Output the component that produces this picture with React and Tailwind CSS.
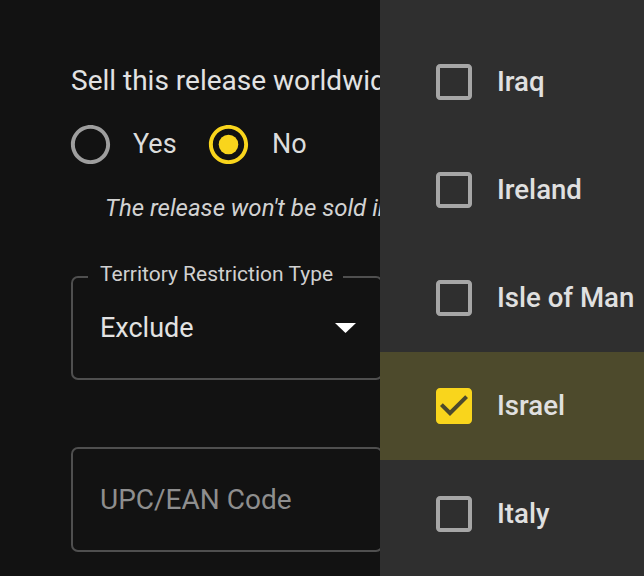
import React from "react";

function RadioIcon({ checked }) {
  const color = checked ? "#f9d51c" : "#9e9e9e";
  return (
    <svg viewBox="0 0 24 24" className="w-[47px] h-[47px] shrink-0" fill={color}>
      <path d="M12 2C6.48 2 2 6.48 2 12s4.48 10 10 10 10-4.48 10-10S17.52 2 12 2zm0 18c-4.42 0-8-3.58-8-8s3.58-8 8-8 8 3.58 8 8-3.58 8-8 8z" />
      {checked && <circle cx="12" cy="12" r="5" />}
    </svg>
  );
}

function CheckIcon({ checked }) {
  if (checked) {
    return (
      <svg viewBox="0 0 24 24" className="w-[48px] h-[48px] shrink-0" fill="#f9d51c">
        <path d="M19 3H5c-1.11 0-2 .9-2 2v14c0 1.1.89 2 2 2h14c1.11 0 2-.9 2-2V5c0-1.1-.89-2-2-2zm-9 14l-5-5 1.41-1.41L10 14.17l7.59-7.59L19 8l-9 9z" />
      </svg>
    );
  }
  return (
    <svg viewBox="0 0 24 24" className="w-[48px] h-[48px] shrink-0" fill="#a6a6a6">
      <path d="M19 5v14H5V5h14m0-2H5c-1.1 0-2 .9-2 2v14c0 1.1.9 2 2 2h14c1.1 0 2-.9 2-2V5c0-1.1-.9-2-2-2z" />
    </svg>
  );
}

const countries = [
  { name: "Iraq", checked: false },
  { name: "Ireland", checked: false },
  { name: "Isle of Man", checked: false },
  { name: "Israel", checked: true },
  { name: "Italy", checked: false },
];

export default function App() {
  return (
    <div className="relative w-[644px] h-[576px] overflow-hidden bg-[#121212] font-['Roboto',sans-serif]">
      <div className="ml-[71px] w-[312px] pt-[63px] flex flex-col">
        <div className="w-[309px] overflow-hidden text-[28px] leading-[36px] text-[#e2e2e2] whitespace-nowrap">
          Sell this release worldwide?
        </div>

        <div className="mt-[21px] h-[48px] flex items-center -ml-[4px]">
          <RadioIcon checked={false} />
          <span className="ml-[19px] w-[72px] text-[27px] leading-[36px] text-[#dcdcdc]">Yes</span>
          <RadioIcon checked={true} />
          <span className="ml-[20px] text-[27px] leading-[36px] text-[#dcdcdc]">No</span>
        </div>

        <div className="mt-[24px] w-[309px] overflow-hidden pl-[34px] text-[24px] leading-[32px] italic text-[#d2d2d2] whitespace-nowrap">
          The release won't be sold in the selected territories.
        </div>

        <div className="relative mt-[52px] h-[104px] border-2 border-[#4f4f4f] rounded-[7px] flex items-center justify-between pl-[27px] pr-[25px]">
          <span className="absolute -top-[18px] left-[15px] pl-[12px] pr-[10px] bg-[#121212] text-[21px] leading-[28px] text-[#d0d0d0] whitespace-nowrap">
            Territory Restriction Type
          </span>
          <span className="text-[27px] leading-[36px] text-[#e2e2e2]">Exclude</span>
          <svg viewBox="0 0 21 10" className="w-[21px] h-[10px]" fill="#ffffff">
            <polygon points="0,0 21,0 10.5,10" />
          </svg>
        </div>

        <div className="mt-[67px] h-[105px] border-2 border-[#4f4f4f] rounded-[7px] flex items-center pl-[27px]">
          <span className="text-[28px] leading-[36px] text-[#8e8e8e] whitespace-nowrap">UPC/EAN Code</span>
        </div>
      </div>

      <div className="absolute top-0 left-[380px] w-[264px] h-full bg-[#2f2f2f] pt-[28px]">
        {countries.map((c) => (
          <div
            key={c.name}
            className={
              "h-[108px] flex items-center pl-[50px] " +
              (c.checked ? "bg-[#4d4a2c]" : "")
            }
          >
            <CheckIcon checked={c.checked} />
            <span className="ml-[19px] text-[27.6px] leading-[36px] font-medium text-[#e0e0e0] whitespace-nowrap">
              {c.name}
            </span>
          </div>
        ))}
      </div>
    </div>
  );
}
